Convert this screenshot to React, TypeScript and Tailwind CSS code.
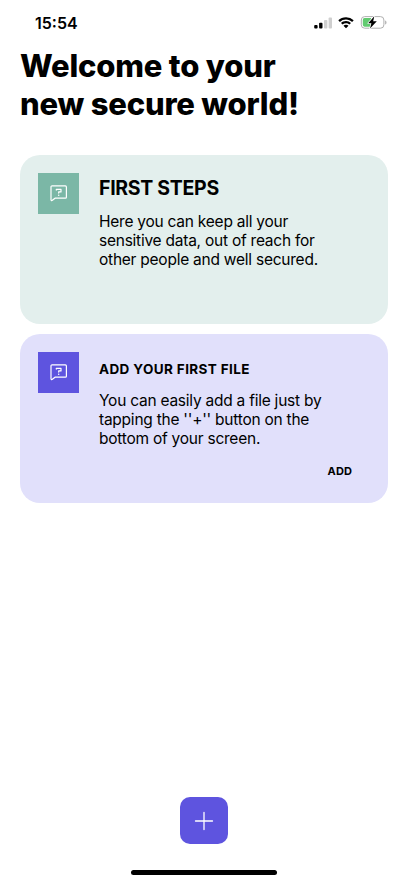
import type { ReactNode } from 'react'

function StatusBar() {
  return (
    <div className="flex h-[45px] items-center justify-between pl-[35px] pr-[21px]">
      <span className="text-[16px] font-semibold leading-5">15:54</span>
      <div className="flex items-center gap-[6px]">
        <svg className="h-3 w-[19px]" viewBox="0 0 19 12" aria-hidden="true">
          <rect x="1.2" y="8" width="3.4" height="3.5" rx="0.9" />
          <rect x="6.1" y="5.8" width="3.4" height="5.7" rx="0.9" />
          <rect x="11" y="3" width="3.4" height="8.5" rx="0.9" fill="#cfcfcf" />
          <rect x="15.6" y="0.5" width="3.4" height="11" rx="0.9" fill="#cfcfcf" />
        </svg>
        <svg className="h-3 w-4" viewBox="0 0 16 12" aria-hidden="true">
          <path d="M8 .3C5 .3 2.300 1.400.3 3.300l1.600 1.600A8.700 8.700 0 0 1 8 2.500c2.400 0 4.500.9 6.100 2.400l1.600-1.600A11.200 11.200 0 0 0 8 .3z" />
          <path d="M8 4.100c-1.900 0-3.700.7-5 1.900l1.600 1.600A5 5 0 0 1 8 6.300c1.300 0 2.500.5 3.400 1.300L13 6A7.300 7.300 0 0 0 8 4.100z" />
          <path d="M8 7.800c-1 0-1.800.3-2.500.9L8 11.300l2.500-2.600c-.7-.6-1.500-.9-2.500-.9z" />
        </svg>
        <svg className="h-[15px] w-[27px]" viewBox="0 0 27 15" aria-hidden="true">
          <rect x="1.300" y="1.600" width="22.600" height="11.600" rx="3.400" fill="#fff" stroke="#b0b0b0" />
          <path d="M4.500 3.100h6.500v8.600H4.500A1.900 1.900 0 0 1 2.800 9.800V5A1.900 1.900 0 0 1 4.500 3.100z" fill="#62ca70" />
          <path d="M25.100 5.400v4c.9-.4 1.400-1.100 1.400-2s-.5-1.600-1.400-2z" fill="#b0b0b0" />
          <path d="M14.300 1.200 8.200 8.200h3.200L10 13.600l6.800-7.300h-3.600z" stroke="#fff" strokeWidth="1.400" strokeLinejoin="round" paintOrder="stroke" />
        </svg>
      </div>
    </div>
  )
}

function QuestionIcon() {
  return (
    <svg
      className="h-[18px] w-[18px] text-white"
      viewBox="0 0 18 18"
      fill="none"
      stroke="currentColor"
      strokeWidth="1.200"
      strokeLinecap="round"
      strokeLinejoin="round"
      aria-hidden="true"
    >
      <path d="M2 1.900h13.400a1 1 0 0 1 1 1v10.300a1 1 0 0 1-1 1H5L2.400 16.300c-.7.600-1.400.3-1.400-.5V2.900a1 1 0 0 1 1-1z" />
      <path d="M6.300 6.100V5.300h4.700v2.600H8.700v1.200" />
      <circle cx="8.700" cy="11.300" r="0.750" fill="currentColor" stroke="none" />
    </svg>
  )
}

interface CardProps {
  className: string
  iconClassName: string
  title: ReactNode
  children: ReactNode
  action?: string
}

function Card({ className, iconClassName, title, children, action }: CardProps) {
  return (
    <section className={`flex h-[169px] rounded-[20px] pl-[18px] pt-[17.5px] ${className}`}>
      <div className={`flex h-[41px] w-[41px] shrink-0 items-center justify-center ${iconClassName}`}>
        <QuestionIcon />
      </div>
      <div className="ml-5 flex-1 pr-9">
        <div className="flex h-[33px] items-center">{title}</div>
        <p className="mt-[6px] whitespace-nowrap text-[15.500px] leading-[19px] tracking-[-0.240px]">{children}</p>
        {action && (
          <button className="mt-[15px] block w-full text-right text-[11px] font-bold leading-4 tracking-[0.100px]">{action}</button>
        )}
      </div>
    </section>
  )
}

export default function App() {
  return (
    <div className="flex h-[883px] w-full flex-col bg-white font-['Inter','Liberation_Sans',sans-serif] text-black">
      <StatusBar />
      <main className="flex-1 px-5">
        <h1 className="mt-[2px] whitespace-nowrap text-[31px] font-extrabold leading-[37.500px] tracking-[-0.200px]">
          Welcome to your
          <br />
          new secure world!
        </h1>
        <div className="mt-[33px] flex flex-col gap-[10px]">
          <Card
            className="bg-[#e3efed]"
            iconClassName="bg-[#7bb7a6]"
            title={<h2 className="text-[19.500px] font-bold tracking-[-0.300px]">FIRST STEPS</h2>}
          >
            Here you can keep all your
            <br />
            sensitive data, out of reach for
            <br />
            other people and well secured.
          </Card>
          <Card
            className="bg-[#e1e0fb]"
            iconClassName="bg-[#5e54df]"
            title={<h2 className="pt-[2px] text-[13.500px] font-bold tracking-[0.380px]">ADD YOUR FIRST FILE</h2>}
            action="ADD"
          >
            You can easily add a file just by
            <br />
            tapping the ''+'' button on the
            <br />
            bottom of your screen.
          </Card>
        </div>
      </main>
      <footer className="flex flex-col items-center">
        <button className="flex h-[47px] w-[47.500px] items-center justify-center rounded-[10px] bg-[#5e54df]" aria-label="Add file">
          <svg className="h-5 w-5" viewBox="0 0 20 20" stroke="#fff" strokeWidth="1.300" strokeLinecap="round" aria-hidden="true">
            <path d="M10 1.500v17M1.500 10h17" />
          </svg>
        </button>
        <div className="mb-2 mt-[26px] h-[5px] w-[146px] rounded-full bg-black" />
      </footer>
    </div>
  )
}
